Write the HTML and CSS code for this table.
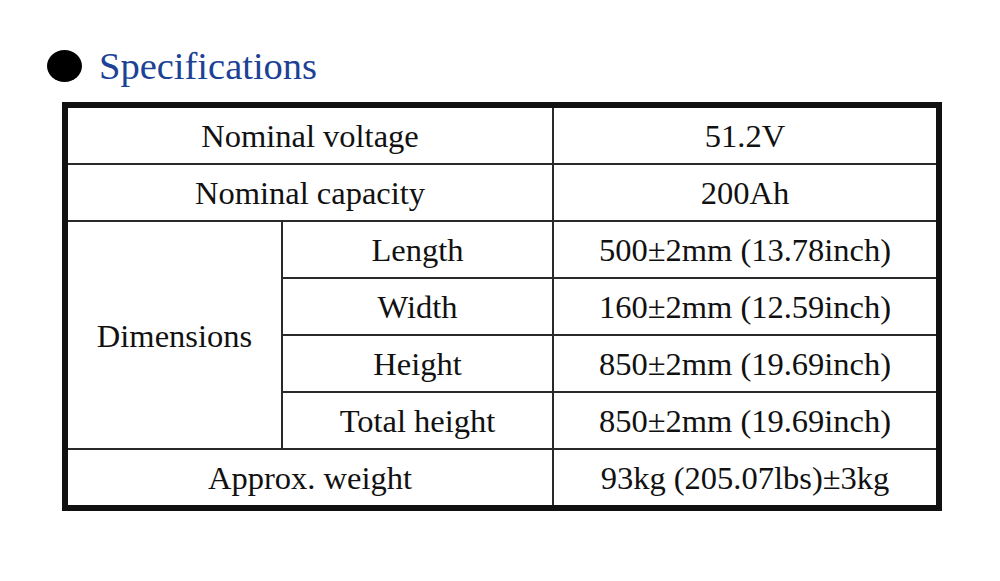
FILE: index.html
```html
<!DOCTYPE html>
<html lang="en">
<head>
    <meta charset="UTF-8">
    <meta name="viewport" content="width=device-width, initial-scale=1.0">
    <title>Specifications</title>
    <link rel="stylesheet" href="styles.css">
</head>
<body>

    <div class="page">
        <h2 class="section-title">
            <span class="bullet"></span>
            Specifications
        </h2>

        <table class="spec-table">
            <colgroup>
                <col class="col-group">
                <col class="col-name">
                <col class="col-value">
            </colgroup>
            <tr>
                <td colspan="2">Nominal voltage</td>
                <td>51.2V</td>
            </tr>
            <tr>
                <td colspan="2">Nominal capacity</td>
                <td>200Ah</td>
            </tr>
            <tr>
                <td rowspan="4">Dimensions</td>
                <td>Length</td>
                <td>500±2mm (13.78inch)</td>
            </tr>
            <tr>
                <td>Width</td>
                <td>160±2mm (12.59inch)</td>
            </tr>
            <tr>
                <td>Height</td>
                <td>850±2mm (19.69inch)</td>
            </tr>
            <tr>
                <td>Total height</td>
                <td>850±2mm (19.69inch)</td>
            </tr>
            <tr>
                <td colspan="2">Approx. weight</td>
                <td>93kg (205.07lbs)±3kg</td>
            </tr>
        </table>
    </div>

</body>
</html>
```

FILE: styles.css
```css
body {
    margin: 0;
    background-color: #fff;
    font-family: "Liberation Serif", "Times New Roman", serif;
    color: #111;
}
.page {
    padding: 44px 0 0 47px;
}
.section-title {
    display: flex;
    align-items: center;
    gap: 17px;
    margin: 0;
    height: 44px;
    font-size: 38.5px;
    font-weight: normal;
    color: #1b4294;
}
.bullet {
    width: 35px;
    height: 32px;
    border-radius: 50%;
    background-color: #000;
}
.spec-table {
    margin: 14px 0 0 15px;
    width: 880px;
    border-collapse: collapse;
    border: 6px solid #111;
    font-size: 32.5px;
    text-align: center;
}
.col-group {
    width: 217px;
}
.col-name {
    width: 271px;
}
.spec-table td {
    height: 53px;
    padding: 2px 0 0;
    border: 2px solid #2a2a2a;
}
```
